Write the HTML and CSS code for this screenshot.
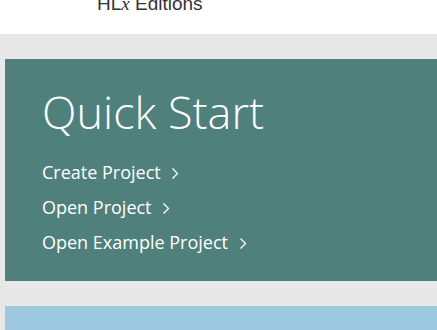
FILE: index.html
```html
<!DOCTYPE html>
<html lang="en">
<head>
  <meta charset="UTF-8">
  <title>HLx Editions - Quick Start</title>
  <meta name="viewport" content="width=device-width, initial-scale=1.0">
  <link rel="stylesheet" href="styles.css">
</head>
<body>
  <header class="top">
    <div class="brand">HL<i>x</i> Editions</div>
  </header>
  <main class="content">
    <section class="quick-start">
      <h1>Quick Start</h1>
      <ul class="links">
        <li><a href="#">Create Project <svg class="chev" width="8" height="13" viewBox="0 0 8 13"><polyline points="1.5,1.5 6.5,6.5 1.5,11.5"/></svg></a></li>
        <li><a href="#">Open Project <svg class="chev" width="8" height="13" viewBox="0 0 8 13"><polyline points="1.5,1.5 6.5,6.5 1.5,11.5"/></svg></a></li>
        <li><a href="#">Open Example Project <svg class="chev" width="8" height="13" viewBox="0 0 8 13"><polyline points="1.5,1.5 6.5,6.5 1.5,11.5"/></svg></a></li>
      </ul>
    </section>
    <section class="next-panel"></section>
  </main>
</body>
</html>
```
FILE: styles.css
```css
:root {
  --teal: #4f807c;
  --blue: #9dc9e0;
  --bg: #e8e8e8;
  --text: #333;
}

body {
  margin: 0;
  background: var(--bg);
  color: var(--text);
  font-family: "Open Sans", sans-serif;
  overflow: hidden;
}
.top {
  background: white;
  height: 34px;
  overflow: hidden;
}
.brand {
  font-family: "Liberation Sans", Arial, sans-serif;
  font-size: 19px;
  line-height: 23px;
  margin: -8px 0 0 97px;
}
.brand i {
  font-family: "Liberation Serif", serif;
}
.content {
  padding: 25px 0 0 5px;
}
.quick-start {
  background: var(--teal);
  color: white;
  padding: 23px 37px 21px;
}
.quick-start h1 {
  margin: 0 0 13px;
  font-size: 45px;
  font-weight: 300;
  line-height: 60px;
}
.links {
  list-style: none;
  margin: 0;
  padding: 0;
}
.links li {
  font-size: 18px;
  line-height: 35px;
}
.links a {
  color: white;
  text-decoration: none;
}
.chev {
  margin-left: 6px;
  vertical-align: -1px;
}
.chev polyline {
  fill: none;
  stroke: white;
  stroke-width: 1.3;
}
.next-panel {
  background: var(--blue);
  margin-top: 25px;
  height: 60px;
}
```
